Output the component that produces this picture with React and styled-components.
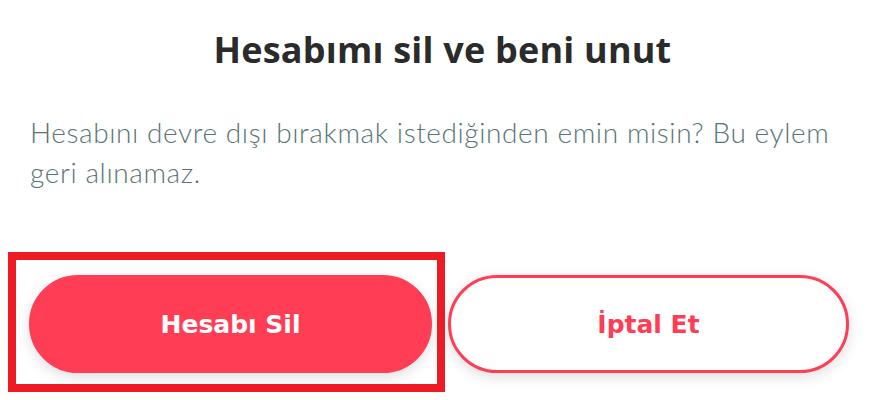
import React from "react";
import styled, { createGlobalStyle } from "styled-components";

const GlobalStyle = createGlobalStyle`
  html, body {
    margin: 0;
    padding: 0;
    background: #ffffff;
  }
  body {
    font-family: Lato, "Noto Sans", sans-serif;
  }
`;

const Dialog = styled.div`
  width: 875px;
  height: 400px;
  box-sizing: border-box;
  padding: 28px 26px 0 30px;
  display: flex;
  flex-direction: column;
  overflow: hidden;
`;

const Title = styled.h1`
  margin: 0;
  font-family: "Open Sans", sans-serif;
  font-weight: 700;
  font-size: 36px;
  line-height: 44px;
  letter-spacing: 0.2px;
  color: #2b2b2b;
  text-align: center;
  padding-left: 6px;
`;

const Message = styled.p`
  margin: 40px 0 0 0;
  font-family: Lato, sans-serif;
  font-weight: 300;
  font-size: 28px;
  line-height: 40px;
  letter-spacing: 0.6px;
  color: #587474;
`;

const Actions = styled.div`
  margin-top: 83px;
  display: grid;
  grid-template-columns: 403px 401px;
  column-gap: 16px;
  margin-left: -1px;
`;

const Highlight = styled.div`
  position: relative;
`;

const Outline = styled.span`
  position: absolute;
  left: -21px;
  top: -23px;
  right: -13px;
  bottom: -19px;
  border: 8px solid #ed1c24;
  pointer-events: none;
`;

const Button = styled.button`
  width: 100%;
  height: 98px;
  border-radius: 49px;
  box-sizing: border-box;
  font-family: "DejaVu Sans", sans-serif;
  font-weight: 700;
  font-size: 25px;
  cursor: pointer;
  box-shadow: 0 4px 14px rgba(0, 0, 0, 0.13);
  border: 3px solid #ff3d55;
  background: ${(p) => (p.$primary ? "#ff3d55" : "#ffffff")};
  color: ${(p) => (p.$primary ? "#ffffff" : "#ff3d55")};
`;

export default function App() {
  return (
    <>
      <GlobalStyle />
      <Dialog>
        <Title>Hesabımı sil ve beni unut</Title>
        <Message>
          Hesabını devre dışı bırakmak istediğinden emin misin? Bu eylem geri
          alınamaz.
        </Message>
        <Actions>
          <Highlight>
            <Button $primary>Hesabı Sil</Button>
            <Outline />
          </Highlight>
          <Button>İptal Et</Button>
        </Actions>
      </Dialog>
    </>
  );
}
